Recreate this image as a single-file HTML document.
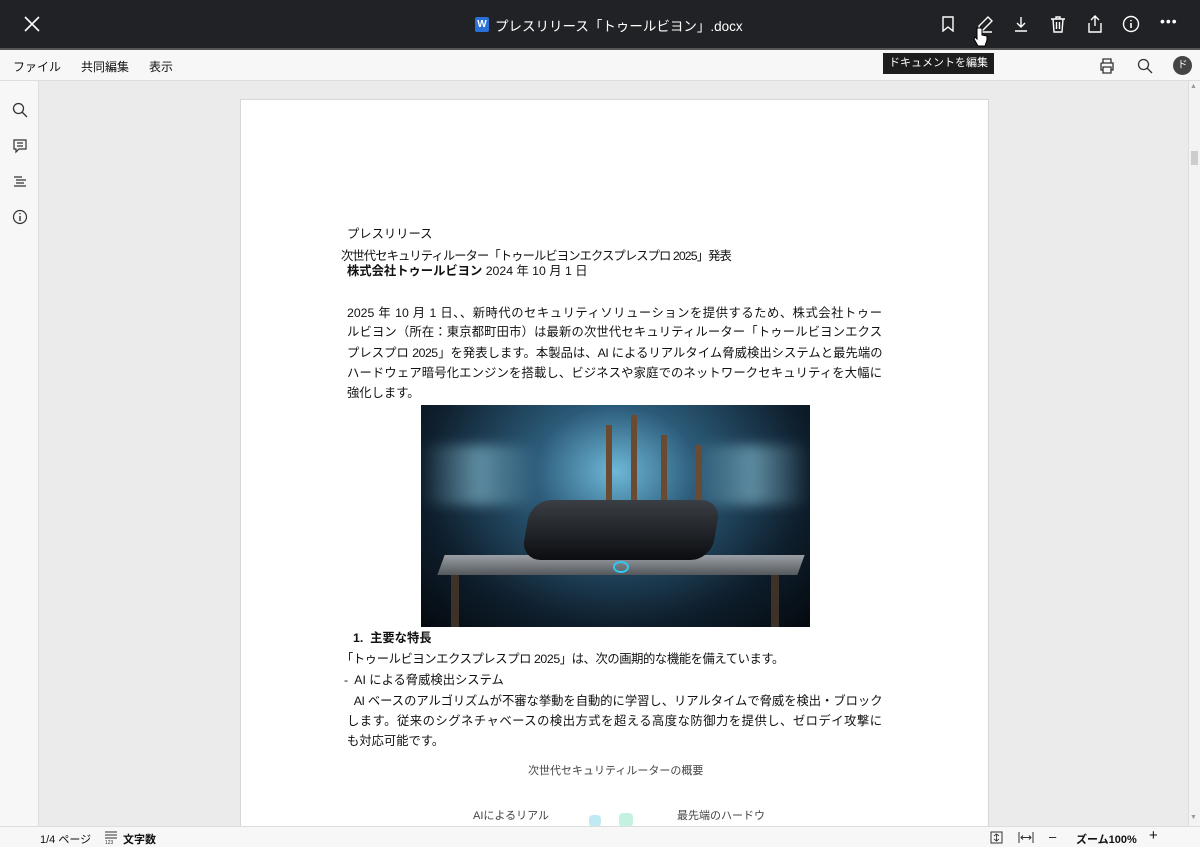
<!DOCTYPE html><html><head><meta charset="utf-8"><style>
*{margin:0;padding:0;box-sizing:border-box}
body{width:1200px;height:847px;overflow:hidden;background:#ebebeb;font-family:"Liberation Sans","Noto Sans CJK JP",sans-serif;position:relative;color:#111}
.top{position:absolute;left:0;top:0;width:1200px;height:48px;background:#202226;color:#fff}
.menu{position:absolute;left:0;top:48px;width:1200px;height:33px;background:#f7f7f7;border-top:2px solid #555;border-bottom:1px solid #ddd;font-size:12px}
.side{position:absolute;left:0;top:81px;width:39px;height:745px;background:#f7f7f7;border-right:1px solid #ddd}
.page{position:absolute;left:240px;top:99px;width:749px;height:740px;background:#fff;border:1px solid #d6d6d6}
.t{position:absolute;font-size:12.3px;white-space:nowrap;line-height:20px}
.j{width:535px;text-align:justify;text-align-last:justify;white-space:normal;overflow:hidden;height:20px}
.bot{position:absolute;left:0;top:826px;width:1200px;height:21px;background:#f7f7f7;border-top:1px solid #ddd;font-size:11px}
.sb{position:absolute;left:1188px;top:81px;width:12px;height:745px;background:#f3f3f3;border-left:1px solid #ddd}
svg{position:absolute}
</style></head><body>
<div class="top">
<svg style="left:23px;top:15px" width="18" height="18" viewBox="0 0 18 18"><path d="M2 2L16 16M16 2L2 16" stroke="#fff" stroke-width="1.6"/></svg>
<div style="position:absolute;left:475px;top:17px;width:14px;height:15px;background:#2b6fd8;border-radius:2px;font-size:10px;font-weight:bold;text-align:center;line-height:15px">W</div>
<div style="position:absolute;left:495px;top:15px;font-size:13.5px">プレスリリース「トゥールビヨン」.docx</div>
<svg style="left:940px;top:16px" width="16" height="16" viewBox="0 0 16 16"><path d="M3 1h10v14l-5-4-5 4z" fill="none" stroke="#fff" stroke-width="1.4"/></svg>
<svg style="left:976px;top:15px" width="18" height="18" viewBox="0 0 18 18"><path d="M12 2l4 4-9 9H3v-4z M3 17h13" fill="none" stroke="#fff" stroke-width="1.4"/></svg>
<svg style="left:1013px;top:15px" width="16" height="18" viewBox="0 0 16 18"><path d="M8 2v10M4 8l4 4 4-4M2 16h12" fill="none" stroke="#fff" stroke-width="1.4"/></svg>
<svg style="left:1050px;top:15px" width="16" height="18" viewBox="0 0 16 18"><path d="M1 4h14M6 4V2h4v2M3 4l1 13h8l1-13M6.5 7v7M9.5 7v7" fill="none" stroke="#fff" stroke-width="1.4"/></svg>
<svg style="left:1086px;top:14px" width="18" height="19" viewBox="0 0 18 19"><path d="M9 12V2M5 6l4-4 4 4M3 9v9h12V9" fill="none" stroke="#fff" stroke-width="1.4"/></svg>
<svg style="left:1122px;top:15px" width="18" height="18" viewBox="0 0 18 18"><circle cx="9" cy="9" r="7.5" fill="none" stroke="#fff" stroke-width="1.4"/><path d="M9 8v5M9 5v1.2" stroke="#fff" stroke-width="1.6"/></svg>
<div style="position:absolute;left:1160px;top:13px;font-size:14px;letter-spacing:1px">•••</div>
<svg style="left:972px;top:26px" width="16" height="22" viewBox="0 0 16 22"><path d="M5 2v11l-2-2-1 2 4 7h7l2-6v-4l-5-1V2z" fill="#fff" stroke="#000" stroke-width="1"/></svg>
</div>
<div class="menu">
<span style="position:absolute;left:13px;top:8px">ファイル</span>
<span style="position:absolute;left:81px;top:8px">共同編集</span>
<span style="position:absolute;left:149px;top:8px">表示</span>
<div style="position:absolute;left:883px;top:3px;width:111px;height:21px;background:#1d1d1d;color:#fff;font-size:11px;line-height:21px;text-align:center">ドキュメントを編集</div>
<svg style="left:1099px;top:8px" width="16" height="16" viewBox="0 0 16 16"><path d="M4 5V1h8v4M2 5h12v7h-2M4 12H2V5M4 9h8v6H4z" fill="none" stroke="#333" stroke-width="1.3"/></svg>
<svg style="left:1137px;top:8px" width="16" height="16" viewBox="0 0 16 16"><circle cx="6.5" cy="6.5" r="5" fill="none" stroke="#333" stroke-width="1.3"/><path d="M10 10l5 5" stroke="#333" stroke-width="1.3"/></svg>
<div style="position:absolute;left:1173px;top:6px;width:19px;height:19px;border-radius:50%;background:#444;color:#fff;font-size:10px;text-align:center;line-height:19px">ド</div>
</div>
<div class="side">
<svg style="left:12px;top:21px" width="16" height="16" viewBox="0 0 16 16"><circle cx="6.5" cy="6.5" r="5" fill="none" stroke="#333" stroke-width="1.3"/><path d="M10 10l5 5" stroke="#333" stroke-width="1.3"/></svg>
<svg style="left:12px;top:57px" width="16" height="16" viewBox="0 0 16 16"><path d="M2 2h12v9H7l-3 3v-3H2z M5 5h6M5 8h6" fill="none" stroke="#333" stroke-width="1.2"/></svg>
<svg style="left:12px;top:93px" width="16" height="16" viewBox="0 0 16 16"><path d="M2 3h8M4 6h10M4 9h8M2 12h12" stroke="#333" stroke-width="1.2"/></svg>
<svg style="left:12px;top:128px" width="16" height="16" viewBox="0 0 16 16"><circle cx="8" cy="8" r="6.5" fill="none" stroke="#333" stroke-width="1.2"/><path d="M8 7v5M8 4v1.2" stroke="#333" stroke-width="1.4"/></svg>
</div>
<div class="sb"><div style="position:absolute;left:2px;top:70px;width:7px;height:14px;background:#ccc"></div><div style="position:absolute;left:1px;top:2px;font-size:7px;color:#999">▲</div><div style="position:absolute;left:1px;top:733px;font-size:7px;color:#999">▼</div></div>
<div class="page">
<div class="t" style="left:106px;top:124px">プレスリリース</div>
<div class="t" style="left:100px;top:146px;letter-spacing:-0.9px">次世代セキュリティルーター「トゥールビヨンエクスプレスプロ 2025」発表</div>
<div class="t" style="left:106px;top:161px"><b>株式会社トゥールビヨン</b> 2024 年 10 月 1 日</div>
<div class="t j" style="left:106px;top:203px">2025 年 10 月 1 日、、新時代のセキュリティソリューションを提供するため、株式会社トゥー</div>
<div class="t j" style="left:106px;top:222px">ルビヨン（所在：東京都町田市）は最新の次世代セキュリティルーター「トゥールビヨンエクス</div>
<div class="t j" style="left:106px;top:243px;letter-spacing:-0.5px">プレスプロ 2025」を発表します。本製品は、AI によるリアルタイム脅威検出システムと最先端の</div>
<div class="t j" style="left:106px;top:263px">ハードウェア暗号化エンジンを搭載し、ビジネスや家庭でのネットワークセキュリティを大幅に</div>
<div class="t" style="left:106px;top:283px">強化します。</div>
<div style="position:absolute;left:180px;top:305px;width:389px;height:222px;overflow:hidden;background:radial-gradient(ellipse at 50% 30%,#6fb8d8 0%,#2b5a78 30%,#0e1e2c 70%,#05090e 100%)">
<div style="position:absolute;left:0;top:40px;width:389px;height:60px;background:linear-gradient(90deg,transparent,rgba(160,220,240,.5),transparent 30%,transparent 70%,rgba(160,220,240,.5),transparent);filter:blur(6px)"></div>
<div style="position:absolute;left:20px;top:150px;width:360px;height:20px;background:linear-gradient(#9aa0a6,#54585c);transform:skewX(-20deg)"></div>
<div style="position:absolute;left:30px;top:170px;width:8px;height:52px;background:#3d3128"></div>
<div style="position:absolute;left:350px;top:170px;width:8px;height:52px;background:#3d3128"></div>
<div style="position:absolute;left:185px;top:20px;width:6px;height:105px;background:#6b4a32"></div>
<div style="position:absolute;left:210px;top:10px;width:6px;height:110px;background:#6b4a32"></div>
<div style="position:absolute;left:240px;top:30px;width:6px;height:100px;background:#6b4a32"></div>
<div style="position:absolute;left:275px;top:40px;width:6px;height:80px;background:#6b4a32"></div>
<div style="position:absolute;left:105px;top:95px;width:190px;height:60px;border-radius:20px;background:linear-gradient(#3a3f45,#0b0d10);transform:skewX(-10deg)"></div>
<div style="position:absolute;left:192px;top:156px;width:16px;height:12px;border:2px solid #2ec8f0;border-radius:50%"></div>
</div>
<div class="t" style="left:112px;top:528px"><b>1.&nbsp;&nbsp;主要な特長</b></div>
<div class="t" style="left:100px;top:549px;letter-spacing:-0.4px">「トゥールビヨンエクスプレスプロ 2025」は、次の画期的な機能を備えています。</div>
<div class="t" style="left:103px;top:570px">-&nbsp; AI による脅威検出システム</div>
<div class="t j" style="left:106px;top:591px;letter-spacing:-0.5px">&nbsp;&nbsp;AI ベースのアルゴリズムが不審な挙動を自動的に学習し、リアルタイムで脅威を検出・ブロック</div>
<div class="t j" style="left:106px;top:611px">します。従来のシグネチャベースの検出方式を超える高度な防御力を提供し、ゼロデイ攻撃に</div>
<div class="t" style="left:106px;top:631px">も対応可能です。</div>
<div class="t" style="left:287px;top:661px;font-size:11px;color:#444">次世代セキュリティルーターの概要</div>
<div class="t" style="left:232px;top:706px;font-size:11px;color:#444">AIによるリアル</div>
<div class="t" style="left:436px;top:706px;font-size:11px;color:#444">最先端のハードウ</div>
<div style="position:absolute;left:348px;top:715px;width:12px;height:12px;background:#bfe9f3;border-radius:4px"></div>
<div style="position:absolute;left:378px;top:713px;width:14px;height:14px;background:#c4f2e0;border-radius:4px"></div>
</div>
<div class="bot">
<span style="position:absolute;left:40px;top:4px">1/4 ページ</span>
<svg style="left:104px;top:3px" width="14" height="15" viewBox="0 0 14 15"><path d="M1 2h12M1 5h12M1 8h12" stroke="#333" stroke-width="1.1"/><text x="1" y="14" font-size="5" fill="#333">123</text></svg>
<span style="position:absolute;left:123px;top:4px;font-weight:bold">文字数</span>
<svg style="left:990px;top:4px" width="13" height="13" viewBox="0 0 13 13"><rect x="1" y="1" width="11" height="11" fill="none" stroke="#333"/><path d="M6.5 3v7M4 5l2.5-2 2.5 2M4 8l2.5 2 2.5-2" fill="none" stroke="#333" stroke-width=".9"/></svg>
<svg style="left:1018px;top:4px" width="16" height="13" viewBox="0 0 16 13"><path d="M1 1v11M15 1v11M3 6.5h10M5 4.5l-2 2 2 2M11 4.5l2 2-2 2" fill="none" stroke="#333"/></svg>
<span style="position:absolute;left:1049px;top:2px;font-size:13px">–</span>
<span style="position:absolute;left:1076px;top:4px;font-weight:bold">ズーム100%</span>
<span style="position:absolute;left:1149px;top:0px;font-size:15px">+</span>
</div>
</body></html>
